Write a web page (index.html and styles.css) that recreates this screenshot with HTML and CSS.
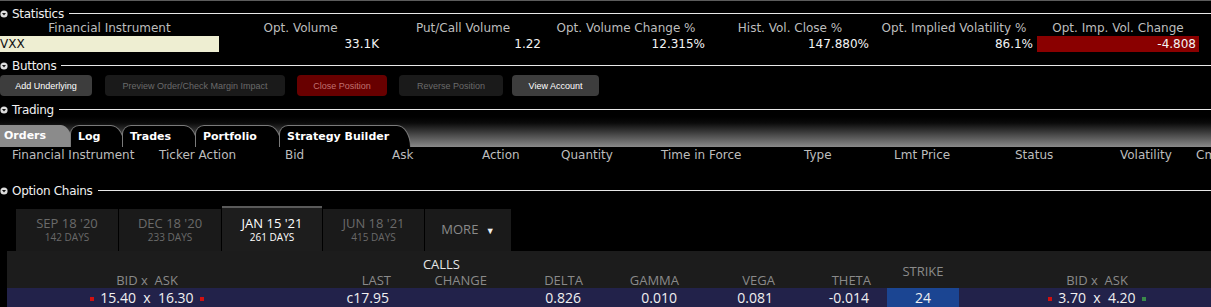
FILE: index.html
```html
<!DOCTYPE html>
<html lang="en">
<head>
    <meta charset="UTF-8">
    <title>Option Trader</title>
    <link rel="stylesheet" href="styles.css">
</head>
<body>
    <div class="topline"></div>

    <!-- Statistics -->
    <div class="sec-head first">
        <svg class="tri" viewBox="0 0 8 8"><circle cx="4" cy="4" r="3.6" fill="#dcdcdc"/><path d="M2 3 L6 3 L4 5.6 Z" fill="#111"/></svg>
        <span class="sec-title">Statistics</span>
        <span class="rule"></span>
    </div>
    <div class="stats">
        <div class="lbl">Financial Instrument</div>
        <div class="lbl">Opt. Volume</div>
        <div class="lbl">Put/Call Volume</div>
        <div class="lbl">Opt. Volume Change %</div>
        <div class="lbl">Hist. Vol. Close %</div>
        <div class="lbl">Opt. Implied Volatility %</div>
        <div class="lbl">Opt. Imp. Vol. Change</div>
        <div class="val inst">VXX</div>
        <div class="val">33.1K</div>
        <div class="val">1.22</div>
        <div class="val">12.315%</div>
        <div class="val">147.880%</div>
        <div class="val">86.1%</div>
        <div class="val neg">-4.808</div>
    </div>

    <!-- Buttons -->
    <div class="sec-head">
        <svg class="tri" viewBox="0 0 8 8"><circle cx="4" cy="4" r="3.6" fill="#dcdcdc"/><path d="M2 3 L6 3 L4 5.6 Z" fill="#111"/></svg>
        <span class="sec-title">Buttons</span>
        <span class="rule"></span>
    </div>
    <div class="buttons">
        <button class="btn on w1">Add Underlying</button>
        <button class="btn off w2">Preview Order/Check Margin Impact</button>
        <button class="btn red w3">Close Position</button>
        <button class="btn off w4">Reverse Position</button>
        <button class="btn on w5">View Account</button>
    </div>

    <!-- Trading -->
    <div class="sec-head">
        <svg class="tri" viewBox="0 0 8 8"><circle cx="4" cy="4" r="3.6" fill="#dcdcdc"/><path d="M2 3 L6 3 L4 5.6 Z" fill="#111"/></svg>
        <span class="sec-title">Trading</span>
        <span class="rule"></span>
    </div>
    <div class="tabbar">
        <div class="tab active t1">Orders</div>
        <div class="tab t2">Log</div>
        <div class="tab t3">Trades</div>
        <div class="tab t4">Portfolio</div>
        <div class="tab t5">Strategy Builder</div>
    </div>
    <div class="orders-head">
        <span>Financial Instrument</span>
        <span>Ticker Action</span>
        <span>Bid</span>
        <span>Ask</span>
        <span>Action</span>
        <span>Quantity</span>
        <span>Time in Force</span>
        <span>Type</span>
        <span>Lmt Price</span>
        <span>Status</span>
        <span>Volatility</span>
        <span>Cmb</span>
    </div>

    <!-- Option Chains -->
    <div class="sec-head chains-head">
        <svg class="tri" viewBox="0 0 8 8"><circle cx="4" cy="4" r="3.6" fill="#dcdcdc"/><path d="M2 3 L6 3 L4 5.6 Z" fill="#111"/></svg>
        <span class="sec-title">Option Chains</span>
        <span class="rule"></span>
    </div>
    <div class="expiries">
        <div class="exp e1"><div class="exp-date">SEP 18 '20</div><div class="exp-days">142 DAYS</div></div>
        <div class="exp e2"><div class="exp-date">DEC 18 '20</div><div class="exp-days">233 DAYS</div></div>
        <div class="exp e3 current"><div class="exp-date">JAN 15 '21</div><div class="exp-days">261 DAYS</div></div>
        <div class="exp e4"><div class="exp-date">JUN 18 '21</div><div class="exp-days">415 DAYS</div></div>
        <div class="exp e5 more">MORE <span class="caret">&#9660;</span></div>
    </div>
    <div class="chain">
        <div class="chain-grid chain-head">
            <div class="calls">CALLS</div>
            <div class="strike-lbl">STRIKE</div>
            <div class="h bidask">BID x&nbsp; ASK</div>
            <div class="h num">LAST</div>
            <div class="h num">CHANGE</div>
            <div class="h num">DELTA</div>
            <div class="h num">GAMMA</div>
            <div class="h num">VEGA</div>
            <div class="h num">THETA</div>
            <div class="h bidask put">BID x&nbsp; ASK</div>
        </div>
        <div class="chain-grid chain-row">
            <div class="d bidask"><span class="sq r"></span>15.40&nbsp; x&nbsp; 16.30<span class="sq r"></span></div>
            <div class="d num">c17.95</div>
            <div class="d num"></div>
            <div class="d num">0.826</div>
            <div class="d num">0.010</div>
            <div class="d num">0.081</div>
            <div class="d num">-0.014</div>
            <div class="d gap"></div>
            <div class="d strike">24</div>
            <div class="d bidask put"><span class="sq r"></span>3.70&nbsp; x&nbsp; 4.20<span class="sq g"></span></div>
        </div>
    </div>
</body>
</html>
```

FILE: styles.css
```css
* {
    margin: 0;
    padding: 0;
    box-sizing: border-box;
}

body {
    background-color: #000;
    color: #fff;
    font-family: "DejaVu Sans", sans-serif;
    font-size: 12px;
    width: 1211px;
    overflow: hidden;
}

.topline {
    height: 1px;
    background: #5c5c5c;
}

/* section headers */
.sec-head {
    display: flex;
    align-items: center;
    height: 15px;
    margin-top: 6px;
}

.sec-head.first {
    margin-top: 5px;
}

.sec-head.chains-head {
    margin-top: 20px;
}

.tri {
    width: 8px;
    height: 8px;
    margin-left: 0;
}

.sec-title {
    margin-left: 4px;
    color: #f0f0f0;
    letter-spacing: -0.3px;
}

.rule {
    flex: 1;
    height: 1px;
    background: #e8e8e8;
    margin-left: 5px;
}

/* statistics */
.stats {
    display: grid;
    grid-template-columns: 219px 163px 162px 164px 164px 164px 164px;
    grid-template-rows: 15px 16px;
}

.lbl {
    color: #bdbdbd;
    text-align: center;
    line-height: 15px;
}

.val {
    text-align: right;
    padding-right: 3px;
    line-height: 16px;
    color: #f4f4f4;
}

.val.inst {
    background: #eeeed2;
    color: #111;
    text-align: left;
    padding: 0;
}

.val.neg {
    background: #8a0000;
    margin: 0 1px;
    padding-right: 3px;
}

/* buttons */
.buttons {
    display: flex;
    height: 21px;
    margin-top: 2px;
}

.btn {
    height: 21px;
    border: none;
    border-radius: 4px;
    font-family: "Liberation Sans", sans-serif;
    font-size: 9px;
    text-align: center;
}

.btn.on {
    background: #3d3d3d;
    color: #fff;
}

.btn.off {
    background: #1a1a1a;
    color: #6a6a6a;
}

.btn.red {
    background: #680000;
    color: #c07070;
}

.w1 { width: 92px; }
.w2 { width: 180px; margin-left: 13px; }
.w3 { width: 90px; margin-left: 12px; }
.w4 { width: 104px; margin-left: 12px; }
.w5 { width: 87px; margin-left: 9px; }

/* trading tabs */
.tabbar {
    height: 30px;
    display: flex;
    align-items: flex-end;
    background: linear-gradient(#000 0%, #0a0a0a 20%, #8a8a8a 100%);
}

.tab {
    height: 22px;
    line-height: 21px;
    font-weight: bold;
    font-size: 11px;
    color: #fff;
    background: #000;
    border: 1px solid #7a7a7a;
    border-bottom: none;
    border-radius: 9px 14px 0 0 / 9px 22px 0 0;
    padding-left: 7px;
    margin-left: -3px;
}

.tab.active {
    background: #8b8b8b;
    border: none;
    border-radius: 0 12px 0 0 / 0 22px 0 0;
    padding-left: 4px;
    margin-left: 0;
}

.t1 { width: 73px; }
.t2 { width: 55px; }
.t3 { width: 76px; }
.t4 { width: 87px; }
.t5 { width: 132px; }

.orders-head {
    display: grid;
    grid-template-columns: 147px 126px 107px 90px 79px 100px 143px 90px 121px 105px 76px 1fr;
    padding-left: 12px;
    height: 16px;
    line-height: 16px;
    color: #bdbdbd;
    white-space: nowrap;
    overflow: hidden;
}

/* option chains */
.expiries {
    display: flex;
    align-items: flex-end;
    height: 45px;
    margin-top: 8px;
    padding-left: 16px;
    font-family: "Open Sans", sans-serif;
}

.exp {
    height: 42px;
    background: #1a1a1a;
    margin-right: 1px;
    text-align: center;
    color: #6a6a6a;
    padding-top: 6px;
}

.exp-date {
    font-size: 13px;
    line-height: 16px;
}

.exp-days {
    font-size: 10px;
    line-height: 12px;
}

.exp.current {
    height: 45px;
    background: #1d1d1d;
    border-top: 2px solid #5a5a5a;
    color: #fff;
    padding-top: 7px;
}

.exp.more {
    font-size: 13px;
    color: #8a8a8a;
    padding-top: 11px;
}

.caret {
    font-size: 9px;
    color: #eee;
    margin-left: 4px;
}

.e1 { width: 102px; }
.e2 { width: 102px; }
.e3 { width: 100px; }
.e4 { width: 101px; }
.e5 { width: 86px; }

.chain {
    margin-left: 7px;
    background: #1c1c1c;
    font-family: "Open Sans", sans-serif;
    overflow: hidden;
}

.chain-grid {
    display: grid;
    grid-template-columns: 290px 96px 96px 96px 96px 96px 96px 14px 72px 252px;
}

.chain-head {
    grid-template-rows: 21px 16px;
    color: #8a8a8a;
    font-size: 13px;
}

.calls {
    grid-column: 1 / 4;
    grid-row: 1;
    text-align: right;
    padding-right: 29px;
    color: #e6e6e6;
    line-height: 21px;
    padding-top: 3px;
}

.strike-lbl {
    grid-column: 9;
    grid-row: 1 / 3;
    align-self: center;
    text-align: center;
    padding-top: 2px;
}

.h {
    grid-row: 2;
    line-height: 16px;
}

.h.bidask {
    grid-column: 1;
}

.h.put {
    grid-column: 10;
}

.bidask {
    text-align: center;
    padding-right: 10px;
}

.bidask.put {
    padding-right: 0;
    padding-left: 24px;
}

.num {
    text-align: right;
    padding-right: 2px;
}

.chain-row {
    height: 20px;
    background: #22224a;
    font-size: 14px;
    line-height: 20px;
    color: #f0f0f0;
}

.d.num {
    padding-right: 4px;
}

.strike {
    background: #1b4592;
    text-align: center;
}

.sq {
    display: inline-block;
    width: 4px;
    height: 4px;
    margin: 0 6px;
    vertical-align: middle;
}

.sq.r {
    background: #d01010;
}

.sq.g {
    background: #3a8a4a;
}
```
